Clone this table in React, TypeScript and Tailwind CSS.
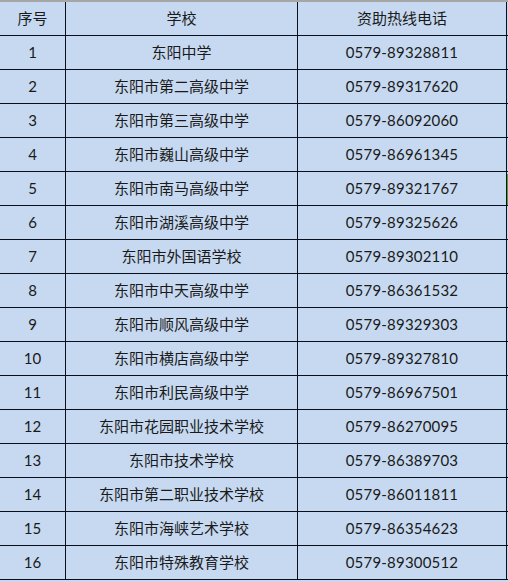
import React from "react";

const rows: [string, string, string][] = [
  ["1", "东阳中学", "0579-89328811"],
  ["2", "东阳市第二高级中学", "0579-89317620"],
  ["3", "东阳市第三高级中学", "0579-86092060"],
  ["4", "东阳市巍山高级中学", "0579-86961345"],
  ["5", "东阳市南马高级中学", "0579-89321767"],
  ["6", "东阳市湖溪高级中学", "0579-89325626"],
  ["7", "东阳市外国语学校", "0579-89302110"],
  ["8", "东阳市中天高级中学", "0579-86361532"],
  ["9", "东阳市顺风高级中学", "0579-89329303"],
  ["10", "东阳市横店高级中学", "0579-89327810"],
  ["11", "东阳市利民高级中学", "0579-86967501"],
  ["12", "东阳市花园职业技术学校", "0579-86270095"],
  ["13", "东阳市技术学校", "0579-86389703"],
  ["14", "东阳市第二职业技术学校", "0579-86011811"],
  ["15", "东阳市海峡艺术学校", "0579-86354623"],
  ["16", "东阳市特殊教育学校", "0579-89300512"],
];

const font = { fontFamily: 'Lato, "Noto Sans CJK SC", sans-serif' };

export default function App() {
  return (
    <div className="w-[508px] h-[582px] bg-[#c6d9f0] text-[#1a1a1a] text-[15px] overflow-hidden" style={font}>
      <div className="h-[2px] bg-[#a6a6a6]" />
      <div className="flex h-[34px] border-b border-[#0a0f1e]">
        <div className="w-[66px] border-r border-[#0a0f1e] flex items-center justify-center">序号</div>
        <div className="w-[232px] border-r border-[#0a0f1e] flex items-center justify-center">学校</div>
        <div className="w-[209px] border-r border-[#0a0f1e] flex items-center justify-center">资助热线电话</div>
      </div>
      {rows.map(([n, s, p], i) => (
        <div key={n} className="flex h-[34px] border-b border-[#0a0f1e]">
          <div className="w-[66px] border-r border-[#0a0f1e] flex items-center justify-center">{n}</div>
          <div className="w-[232px] border-r border-[#0a0f1e] flex items-center justify-center">{s}</div>
          <div className="w-[209px] border-r border-[#0a0f1e] flex items-center justify-center tracking-[0.2px]">{p}</div>
          {i === 4 ? <div className="w-[1px] mt-[2px] bg-[#3fa535]" /> : null}
        </div>
      ))}
    </div>
  );
}
